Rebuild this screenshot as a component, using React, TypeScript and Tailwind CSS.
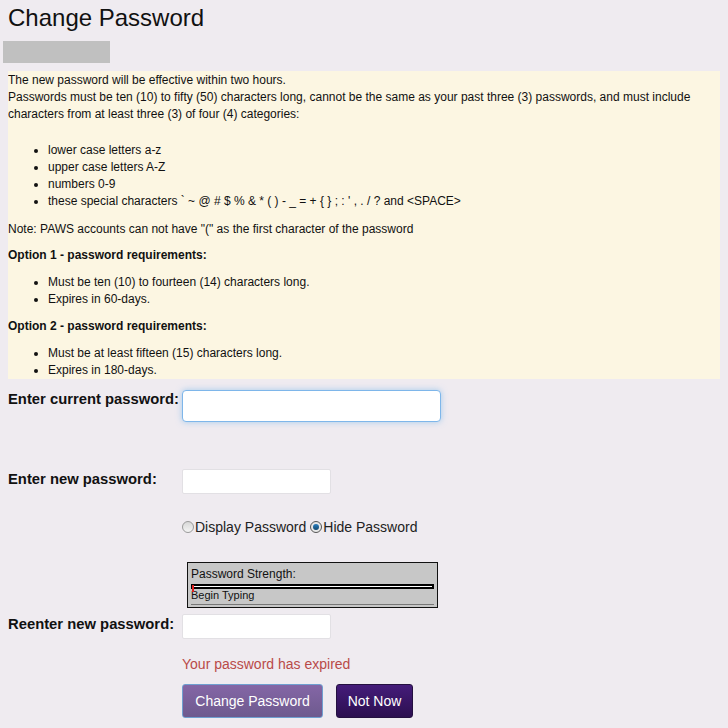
import React from "react";

export default function App() {
  return (
    <div className="min-h-[728px] w-[728px] bg-[#efebf0] text-[#111] font-['Liberation_Sans',Arial,sans-serif] overflow-hidden">
      <h1 className="pl-[8px] pt-[4px] text-[24px] leading-[28px] font-normal">Change Password</h1>
      <div className="ml-[3px] mt-[9px] w-[107px] h-[22px] bg-[#c0c0c0]" />
      <div className="ml-[8px] mt-[8px] w-[712px] h-[308px] bg-[#fcf6e2] text-[12px] leading-[17px] overflow-hidden pt-[1px]">
        <div>The new password will be effective within two hours.</div>
        <p>
          Passwords must be ten (10) to fifty (50) characters long, cannot be the same as your past three (3) passwords, and must include characters from at least three (3) of four (4) categories:
        </p>
        <ul className="list-disc pl-[40px] mt-[19px]">
          <li>lower case letters a-z</li>
          <li>upper case letters A-Z</li>
          <li>numbers 0-9</li>
          <li>these special characters ` ~ @ # $ % &amp; * ( ) - _ = + {"{"} {"}"} ; : ' , . / ? and &lt;SPACE&gt;</li>
        </ul>
        <p className="mt-[11px]">Note: PAWS accounts can not have "(" as the first character of the password</p>
        <p className="mt-[9px] font-bold">Option 1 - password requirements:</p>
        <ul className="list-disc pl-[40px] mt-[10px]">
          <li>Must be ten (10) to fourteen (14) characters long.</li>
          <li>Expires in 60-days.</li>
        </ul>
        <p className="mt-[10px] font-bold">Option 2 - password requirements:</p>
        <ul className="list-disc pl-[40px] mt-[10px]">
          <li>Must be at least fifteen (15) characters long.</li>
          <li>Expires in 180-days.</li>
        </ul>
      </div>

      <div className="pl-[8px] mt-[11px] flex items-start">
        <label className="w-[174px] mt-[1px] text-[14.8px] font-bold leading-[16px] text-[#111] whitespace-nowrap">Enter current password:</label>
        <input
          type="password"
          className="w-[259px] h-[32px] bg-white border border-[#7eb6ea] rounded-[4px] shadow-[0_0_6px_rgba(102,175,233,0.55)] outline-none"
        />
      </div>

      <div className="pl-[8px] mt-[47px] flex items-start">
        <label className="w-[174px] mt-[2px] text-[14.8px] font-bold leading-[16px] whitespace-nowrap">Enter new password:</label>
        <input type="password" className="w-[149px] h-[25px] bg-white border border-[#e2e0e4] rounded-[2px] outline-none" />
      </div>

      <div className="pl-[182px] mt-[25px] flex items-center text-[14px] leading-[16px] text-[#222]">
        <span className="w-[12px] h-[12px] rounded-full border border-[#9a9a9a] bg-gradient-to-b from-[#d8d8d8] to-[#f4f4f4]" />
        <span className="ml-[1px]">Display Password</span>
        <span className="ml-[4px] w-[12px] h-[12px] rounded-full border border-[#555] bg-[#e8e8e8] flex items-center justify-center">
          <span className="w-[6px] h-[6px] rounded-full bg-gradient-to-b from-[#2a7fc0] to-[#14496f]" />
        </span>
        <span className="ml-[1px]">Hide Password</span>
      </div>

      <div className="ml-[187px] mt-[27px] w-[251px] h-[46px] bg-[#c7c7c7] border border-[#111] px-[3px] pt-[4px]">
        <div className="text-[12px] leading-[14px] text-[#111]">Password Strength:</div>
        <div className="relative mt-[3px] h-[5px] border-2 border-black bg-white">
          <span className="absolute left-[-1px] top-[-1px] w-[2px] h-[7px] bg-[#e02020]" />
        </div>
        <div className="text-[11px] leading-[13px] text-[#111]">Begin Typing</div>
        <div className="mt-[2px] h-[1px] bg-[#777]" />
      </div>

      <div className="pl-[8px] mt-[6px] flex items-start">
        <label className="w-[174px] mt-[2px] text-[14.8px] font-bold leading-[16px] whitespace-nowrap">Reenter new password:</label>
        <input type="password" className="w-[149px] h-[25px] bg-white border border-[#e2e0e4] rounded-[2px] outline-none" />
      </div>

      <div className="pl-[182px] mt-[17px] text-[14px] leading-[16px] text-[#b94a48]">Your password has expired</div>

      <div className="pl-[182px] mt-[12px] flex gap-[13px]">
        <button className="w-[141px] h-[34px] rounded-[3px] border border-[#6f9fd0] bg-gradient-to-b from-[#8466a6] to-[#6e5a8e] text-white text-[14px]">
          Change Password
        </button>
        <button className="w-[77px] h-[34px] rounded-[3px] border border-[#241040] bg-gradient-to-b from-[#451c7a] to-[#2c0f50] text-white text-[14px]">
          Not Now
        </button>
      </div>
    </div>
  );
}
